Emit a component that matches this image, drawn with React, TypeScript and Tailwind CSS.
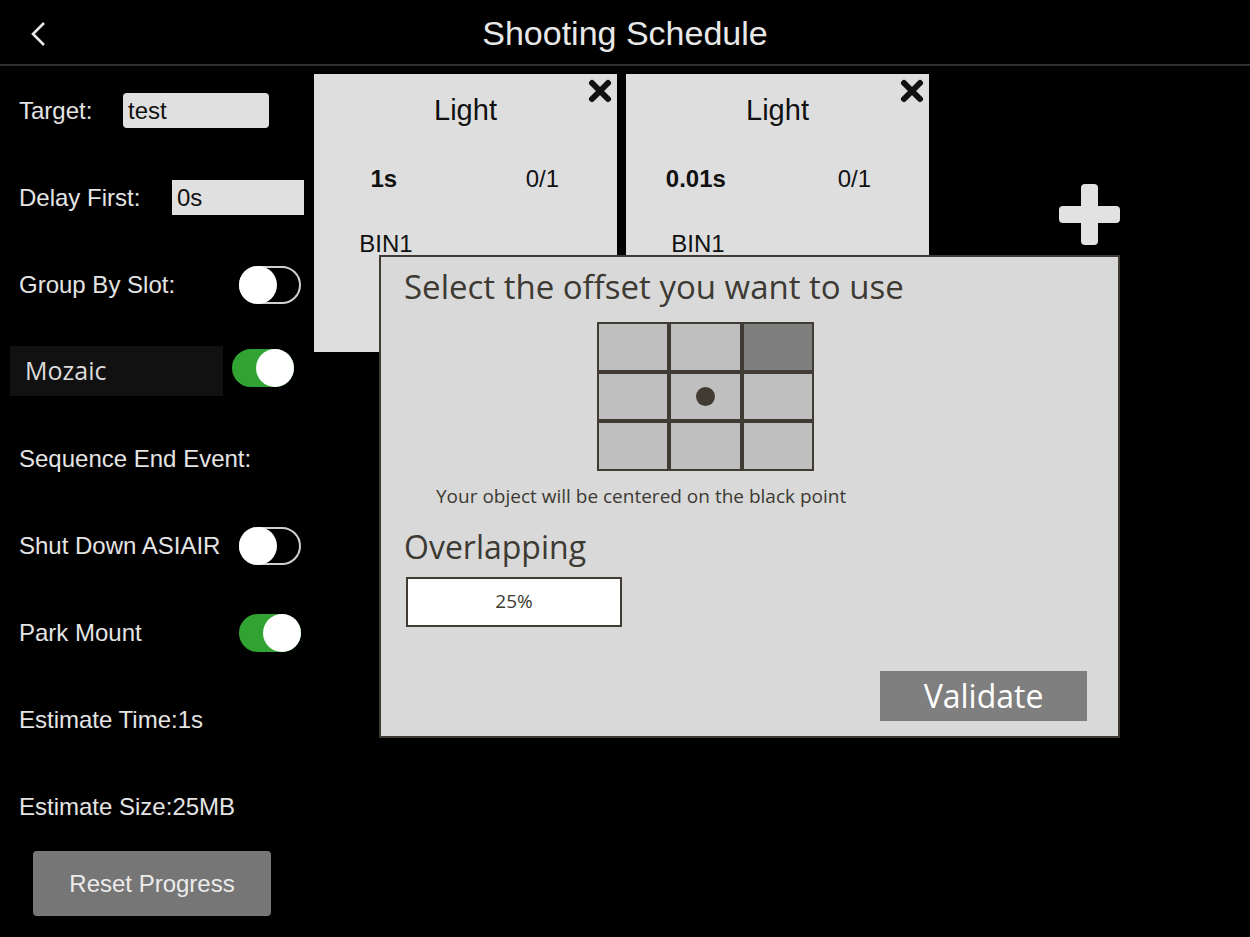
import React, { useState } from 'react';

type ToggleProps = { on: boolean; onClick?: () => void };

function Toggle({ on, onClick }: ToggleProps) {
  return (
    <button
      onClick={onClick}
      className={`relative h-[38px] w-[62px] rounded-full border-2 ${
        on ? 'bg-[#31a332] border-[#31a332]' : 'bg-black border-[#d0d0d0]'
      }`}
    >
      <span
        className={`absolute top-[-2px] h-[38px] w-[38px] rounded-full bg-white ${on ? 'right-[-2px]' : 'left-[-2px]'}`}
      />
    </button>
  );
}

function Card({ exposure }: { exposure: string }) {
  return (
    <div className="relative h-[278px] w-[303px] shrink-0 overflow-hidden bg-[#dedede] text-[#111]">
      <button className="absolute right-[4px] top-[4px] h-[26px] w-[26px]">
        <svg viewBox="0 0 26 26" className="h-[26px] w-[26px]">
          <path d="M5 5 L21 21 M21 5 L5 21" stroke="#111" strokeWidth="6" strokeLinecap="round" />
        </svg>
      </button>
      <div className="flex h-[64px] items-end justify-center pb-[6px] text-[29px]">Light</div>
      <div className="mt-[26px] flex h-[30px] items-center text-[24px]">
        <div className="w-[144px] text-center font-bold">{exposure}</div>
        <div className="w-[168px] pl-[14px] text-center">0/1</div>
      </div>
      <div className="mt-[35px] flex h-[30px] items-center text-[24px]">
        <div className="w-[144px] text-center">BIN1</div>
      </div>
    </div>
  );
}

export default function App() {
  const [groupBySlot, setGroupBySlot] = useState(false);
  const [mozaic, setMozaic] = useState(true);
  const [shutDown, setShutDown] = useState(false);
  const [parkMount, setParkMount] = useState(true);
  const [selected, setSelected] = useState(2);

  const labelRow = 'flex h-[87px] items-center pl-[19px] pt-[2px] text-[24px] text-[#e4e4e4]';

  return (
    <div className="relative h-[937px] w-[1250px] overflow-hidden bg-black font-['Liberation_Sans',Arial,sans-serif]">
      {/* Header */}
      <div className="relative flex h-[66px] items-center justify-center border-b-2 border-[#303030]">
        <button className="absolute left-[28px] top-[20px]">
          <svg viewBox="0 0 20 28" className="h-[28px] w-[20px]">
            <polyline points="16,3 5,14 16,25" fill="none" stroke="#e8e8e8" strokeWidth="2.6" />
          </svg>
        </button>
        <h1 className="mt-[2px] text-[34px] text-[#e8e8e8]">Shooting Schedule</h1>
      </div>

      <div className="flex">
        {/* Left settings column */}
        <div className="w-[314px] shrink-0">
          <div className={labelRow}>
            <span className="w-[104px]">Target:</span>
            <div className="flex h-[35px] w-[146px] items-center rounded-[4px] bg-[#e0e0e0] pl-[5px] text-[24px] text-[#111]">
              test
            </div>
          </div>
          <div className={labelRow}>
            <span className="w-[153px]">Delay First:</span>
            <div className="flex h-[35px] w-[132px] items-center bg-[#e0e0e0] pl-[5px] text-[24px] text-[#111]">0s</div>
          </div>
          <div className={labelRow}>
            <span className="w-[220px]">Group By Slot:</span>
            <Toggle on={groupBySlot} onClick={() => setGroupBySlot(!groupBySlot)} />
          </div>
          <div className="flex h-[87px] items-center pl-[10px]">
            <div className="flex h-[50px] w-[213px] items-center bg-[#111111] pl-[15px] font-['Open_Sans',sans-serif] text-[25px] text-[#dcdcdc]">
              Mozaic
            </div>
            <div className="ml-[9px]">
              <Toggle on={mozaic} onClick={() => setMozaic(!mozaic)} />
            </div>
          </div>
          <div className={labelRow}>Sequence End Event:</div>
          <div className={labelRow}>
            <span className="w-[220px]">Shut Down ASIAIR</span>
            <Toggle on={shutDown} onClick={() => setShutDown(!shutDown)} />
          </div>
          <div className={labelRow}>
            <span className="w-[220px]">Park Mount</span>
            <Toggle on={parkMount} onClick={() => setParkMount(!parkMount)} />
          </div>
          <div className={labelRow}>Estimate Time:1s</div>
          <div className={labelRow}>Estimate Size:25MB</div>
          <button className="ml-[33px] mt-[2px] h-[65px] w-[238px] rounded-[4px] bg-[#767676] text-[24px] text-[#ececec]">
            Reset Progress
          </button>
        </div>

        {/* Exposure cards */}
        <div className="flex gap-[9px] pt-[8px]">
          <Card exposure="1s" />
          <Card exposure="0.01s" />
          <div className="ml-[121px] mt-[110px] h-[61px] w-[61px]">
            <svg viewBox="0 0 61 61" className="h-[61px] w-[61px]">
              <rect x="22" y="0" width="17" height="61" rx="4" fill="#e2e2e2" />
              <rect x="0" y="22" width="61" height="17" rx="4" fill="#e2e2e2" />
            </svg>
          </div>
        </div>
      </div>

      {/* Offset dialog */}
      <div className="absolute left-[379px] top-[255px] flex h-[483px] w-[741px] flex-col border-2 border-[#3f3b33] bg-[#d9d9d9] pl-[23px] font-['Open_Sans',sans-serif] text-[#3d3a33]">
        <div className="flex h-[60px] items-center text-[33px]">Select the offset you want to use</div>
        <div className="ml-[193px] mt-[5px] grid w-[217px] grid-cols-3">
          {Array.from({ length: 9 }).map((_, i) => (
            <button
              key={i}
              onClick={() => setSelected(i)}
              className={`flex h-[49.5px] items-center justify-center border-2 border-[#403c33] ${
                selected === i ? 'bg-[#7f7f7f]' : 'bg-[#bfbfbf]'
              }`}
            >
              {i === 4 && <span className="h-[19px] w-[19px] rounded-full bg-[#403c33]" />}
            </button>
          ))}
        </div>
        <div className="ml-[32px] mt-[9px] flex h-[34px] items-center text-[19px]">
          Your object will be centered on the black point
        </div>
        <div className="mt-[13px] flex h-[40px] items-center text-[32px]">Overlapping</div>
        <div className="ml-[2px] mt-[10px] flex h-[50px] w-[216px] items-center justify-center border-2 border-[#403c33] bg-white text-[19px]">
          25%
        </div>
        <button className="mr-[31px] mt-[44px] h-[50px] w-[207px] self-end bg-[#7f7f7f] text-[32px] text-white">
          Validate
        </button>
      </div>
    </div>
  );
}
